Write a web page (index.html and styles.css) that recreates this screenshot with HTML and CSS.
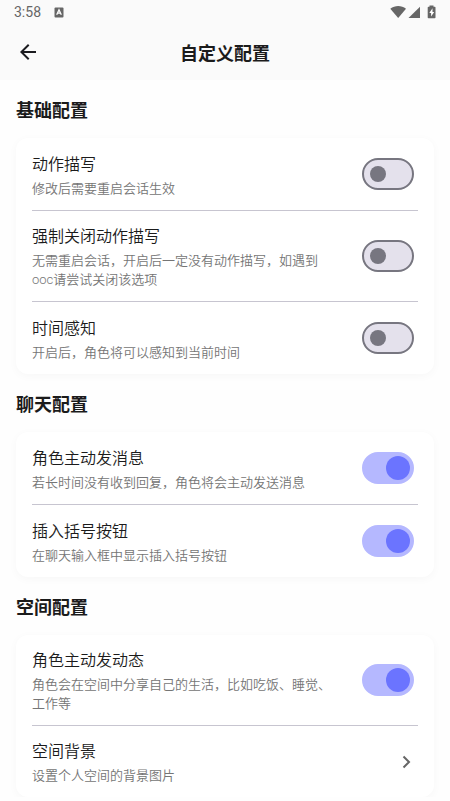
FILE: index.html
```html
<!DOCTYPE html>
<html lang="zh-CN">
<head>
<meta charset="utf-8">
<meta name="viewport" content="width=device-width, initial-scale=1">
<title>自定义配置</title>
<link rel="stylesheet" href="styles.css">
</head>
<body>
<header class="top">
  <div class="status">
    <span class="clock">3:58</span>
    <svg class="status-app" width="10" height="11" viewBox="0 0 10 11" aria-hidden="true">
      <rect width="9" height="10" x="0.5" y="0.5" rx="1" fill="#666"/>
      <path d="M2.7 7.7 5 2.8l2.3 4.9M3.6 6.2h2.8" fill="none" stroke="#fff" stroke-width="1.3"/>
    </svg>
    <svg class="status-system" width="46" height="14" viewBox="0 0 46 14" aria-hidden="true">
      <path d="M0.3 3.8C5 0 11.400 0 16 3.800L8.200 13z" fill="#666"/>
      <path d="M30 1.800V13H18.500z" fill="#666"/>
      <path d="M39.500 0.500h4v1.300h1.200q.8 0 .8.800v9.800q0 .8-.8.800h-6.200q-.8 0-.8-.8V2.600q0-.8.8-.8h1z" fill="#666"/>
      <path d="M42.500 3.300 39.300 8h1.800v3.500L44.200 7h-1.700z" fill="#fff"/>
    </svg>
  </div>
  <div class="appbar">
    <button class="back" type="button" aria-label="返回">
      <svg width="24" height="24" viewBox="0 0 24 24" aria-hidden="true"><path d="M20 11H7.830l5.590-5.590L12 4l-8 8 8 8 1.410-1.410L7.830 13H20z" fill="#1b1b1f"/></svg>
    </button>
    <h1 class="title">自定义配置</h1>
  </div>
</header>
<main class="content">
  <section>
    <h2 class="heading">基础配置</h2>
    <div class="card">
      <label class="row">
        <span class="text"><span class="name">动作描写</span><span class="desc">修改后需要重启会话生效</span></span>
        <input class="switch" type="checkbox" role="switch">
      </label>
      <label class="row">
        <span class="text"><span class="name">强制关闭动作描写</span><span class="desc">无需重启会话，开启后一定没有动作描写，如遇到ooc请尝试关闭该选项</span></span>
        <input class="switch" type="checkbox" role="switch">
      </label>
      <label class="row">
        <span class="text"><span class="name">时间感知</span><span class="desc">开启后，角色将可以感知到当前时间</span></span>
        <input class="switch" type="checkbox" role="switch">
      </label>
    </div>
  </section>
  <section>
    <h2 class="heading">聊天配置</h2>
    <div class="card">
      <label class="row">
        <span class="text"><span class="name">角色主动发消息</span><span class="desc">若长时间没有收到回复，角色将会主动发送消息</span></span>
        <input class="switch" type="checkbox" role="switch" checked>
      </label>
      <label class="row">
        <span class="text"><span class="name">插入括号按钮</span><span class="desc">在聊天输入框中显示插入括号按钮</span></span>
        <input class="switch" type="checkbox" role="switch" checked>
      </label>
    </div>
  </section>
  <section>
    <h2 class="heading">空间配置</h2>
    <div class="card">
      <label class="row">
        <span class="text"><span class="name">角色主动发动态</span><span class="desc">角色会在空间中分享自己的生活，比如吃饭、睡觉、工作等</span></span>
        <input class="switch" type="checkbox" role="switch" checked>
      </label>
      <button class="row" type="button">
        <span class="text"><span class="name">空间背景</span><span class="desc">设置个人空间的背景图片</span></span>
        <svg class="chevron" width="24" height="24" viewBox="0 0 24 24" aria-hidden="true"><path d="M9.500 6.500 15 12l-5.500 5.500" fill="none" stroke="#666" stroke-width="2"/></svg>
      </button>
    </div>
  </section>
</main>
</body>
</html>
```
FILE: styles.css
```css
* {
  box-sizing: border-box;
}

body {
  margin: 0;
  background: #fefefe;
  color: #1b1b1b;
  font-family: Roboto, "Noto Sans CJK SC", sans-serif;
}

.top {
  background: #fafafa;
}

.status {
  display: flex;
  align-items: center;
  height: 24px;
  padding: 0 14px;
}

.clock {
  color: #666;
  font-size: 14px;
  line-height: 26px;
}

.status-app {
  margin-left: 13px;
}

.status-system {
  margin-left: auto;
}

.appbar {
  display: grid;
  grid-template-columns: 48px 1fr 48px;
  align-items: center;
  height: 56px;
  padding: 0 4px;
}

.back {
  display: grid;
  place-items: center;
  width: 48px;
  height: 48px;
  padding: 0;
  border: 0;
  background: none;
}

.title,
.heading {
  margin: 0;
  font-size: 18px;
  font-weight: 700;
  line-height: 26px;
}

.title {
  padding-top: 3px;
  text-align: center;
}

.content {
  padding: 0 16px;
}

.heading {
  padding: 18px 0 14px;
}

.card {
  padding: 0 16px;
  border-radius: 12px;
  background: #fff;
  box-shadow: 0 2px 10px rgba(0, 0, 0, 0.03);
}

.row {
  display: flex;
  align-items: center;
  gap: 24px;
  width: 100%;
  padding: 12px 0;
  border: 0;
  background: none;
  color: inherit;
  font: inherit;
  text-align: left;
}

.row + .row {
  border-top: 1px solid #c7c5d0;
}

.text {
  display: flex;
  flex: 1;
  flex-direction: column;
  gap: 1px;
}

.name {
  font-size: 16px;
  font-weight: 350;
  line-height: 27px;
}

.desc {
  color: #757575;
  font-size: 13px;
  font-weight: 350;
  line-height: 19px;
}

.switch {
  flex: none;
  display: flex;
  align-items: center;
  appearance: none;
  width: 52px;
  height: 32px;
  margin: 8px 4px;
  padding: 0 6px;
  border: 2px solid #777680;
  border-radius: 16px;
  background: #e4e1ec;
}

.switch::before {
  content: "";
  width: 16px;
  height: 16px;
  border-radius: 50%;
  background: #777680;
}

.switch:checked {
  justify-content: flex-end;
  padding: 0 2px;
  border-color: #b5b8ff;
  background: #b5b8ff;
}

.switch:checked::before {
  width: 24px;
  height: 24px;
  background: #6b74ff;
}

.chevron {
  flex: none;
}
```
